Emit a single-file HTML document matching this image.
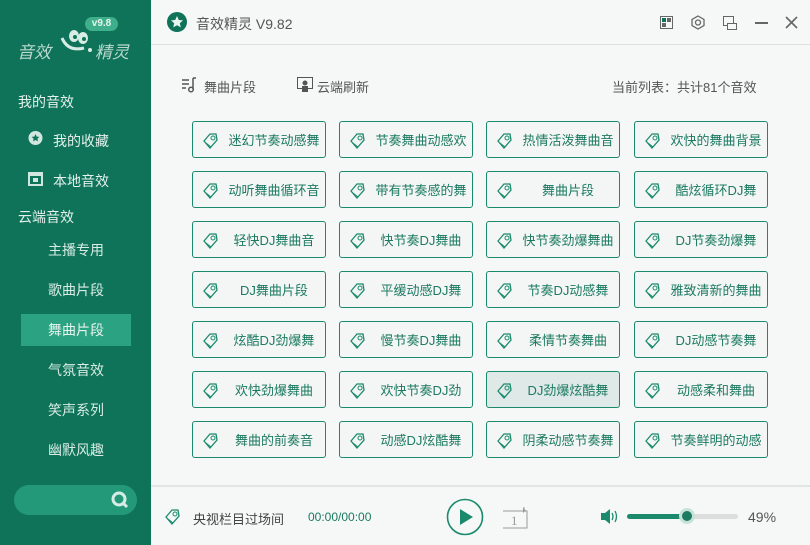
<!DOCTYPE html>
<html><head><meta charset="utf-8"><style>
*{margin:0;padding:0;box-sizing:border-box}
body{width:810px;height:545px;overflow:hidden;font-family:"Liberation Sans","Noto Sans CJK SC",sans-serif;background:#f5f8f7;position:relative}
.side{position:absolute;left:0;top:0;width:151px;height:545px;background:#0f7359}
.side .t{position:absolute;color:#e3f0ec;font-size:14px}
.side .s{position:absolute;left:21px;width:110px;height:32px;line-height:32px;text-align:center;color:#d8ece5;font-size:14px}
.top{position:absolute;left:151px;top:0;right:0;height:45px;border-bottom:1px solid #dde2e0}
.btn{position:absolute;width:134px;height:37px;border:1.5px solid #1b8a6c;border-radius:3px;background:#f4f6f5;color:#1b7a60;font-size:13px;line-height:37px;padding-left:30px;text-align:center}
.btn svg{position:absolute;left:9px;top:10px}
.btn.sel{background:#dfe9e7}
.gray{color:#555;font-size:13px;position:absolute}
</style></head><body>
<div class="side">
 <div style="position:absolute;left:85px;top:17px;width:33px;height:14px;border-radius:7px;background:#3fae8a;color:#e8f5f0;font-size:10px;line-height:14px;text-align:center;font-weight:bold">v9.8</div>
 <div style="position:absolute;left:17px;top:38px;color:#b9d9cf;font-size:17px;font-style:italic">音效</div>
 <svg style="position:absolute;left:58px;top:26px" width="36" height="30"><path d="M4 12 Q10 26 26 22" stroke="#d7ece5" stroke-width="3" fill="none"/><ellipse cx="16" cy="10" rx="5" ry="6" fill="#d7ece5"/><ellipse cx="25" cy="12" rx="5" ry="6" fill="#d7ece5"/><circle cx="17" cy="11" r="2" fill="#0f7359"/><circle cx="26" cy="13" r="2" fill="#0f7359"/><circle cx="32" cy="24" r="2" fill="#d7ece5"/></svg>
 <div style="position:absolute;left:95px;top:38px;color:#b9d9cf;font-size:17px;font-style:italic">精灵</div>
 <div class="t" style="left:18px;top:92px">我的音效</div>
 <svg style="position:absolute;left:28px;top:131px" width="15" height="15"><circle cx="7.5" cy="7" r="7" fill="#d0e6df"/><path d="M7.5 3l1.2 2.6 2.7.3-2 1.8.6 2.7-2.5-1.4-2.5 1.4.6-2.7-2-1.8 2.7-.3z" fill="#0f7359"/></svg>
 <div class="t" style="left:53px;top:131px">我的收藏</div>
 <svg style="position:absolute;left:28px;top:172px" width="15" height="14"><rect x="0" y="0" width="15" height="14" fill="#d0e6df"/><rect x="2" y="4" width="11" height="8" fill="#0f7359"/><rect x="5" y="6" width="5" height="4" fill="#d0e6df"/></svg>
 <div class="t" style="left:53px;top:171px">本地音效</div>
 <div class="t" style="left:18px;top:207px">云端音效</div>
 <div class="s" style="top:234px">主播专用</div>
 <div class="s" style="top:274px">歌曲片段</div>
 <div class="s" style="top:314px;background:#2ba281;color:#e6f3ef">舞曲片段</div>
 <div class="s" style="top:354px">气氛音效</div>
 <div class="s" style="top:394px">笑声系列</div>
 <div class="s" style="top:434px">幽默风趣</div>
 <div style="position:absolute;left:14px;top:485px;width:123px;height:30px;border-radius:15px;background:#24997a"></div>
 <svg style="position:absolute;left:110px;top:490px" width="20" height="20"><circle cx="9" cy="9" r="6" stroke="#d7ece5" stroke-width="3" fill="none"/><path d="M13 13l4 4" stroke="#d7ece5" stroke-width="3"/></svg>
</div>
<div class="top">
 <svg style="position:absolute;left:16px;top:12px" width="20" height="20"><circle cx="10" cy="10" r="10" fill="#0f7359"/><path d="M10 4l1.8 4 4.2.4-3.2 2.8 1 4.2L10 13.2 6.2 15.4l1-4.2L4 8.4l4.2-.4z" fill="#e8f5f0"/></svg>
 <div style="position:absolute;left:45px;top:14px;font-size:14px;color:#555">音效精灵 V9.82</div>
 <svg style="position:absolute;left:509px;top:16px" width="13" height="13"><rect x=".5" y=".5" width="12" height="12" fill="none" stroke="#666"/><rect x="2" y="2" width="4" height="4" fill="#0f7359"/><rect x="7" y="2" width="4" height="4" fill="#666"/><rect x="2" y="7" width="4" height="4" fill="#666"/></svg>
 <svg style="position:absolute;left:540px;top:15px" width="14" height="15"><path d="M7 1l6 3.5v6L7 14 1 10.5v-6z" fill="none" stroke="#666" stroke-width="1.3"/><circle cx="7" cy="7.5" r="2.5" fill="none" stroke="#666" stroke-width="1.3"/></svg>
 <svg style="position:absolute;left:572px;top:16px" width="14" height="14"><rect x=".5" y=".5" width="10" height="9" fill="none" stroke="#666"/><rect x="4.5" y="7.5" width="9" height="6" fill="#f5f8f7" stroke="#666"/></svg>
 <div style="position:absolute;left:604px;top:22px;width:13px;height:2px;background:#666"></div>
 <svg style="position:absolute;left:634px;top:16px" width="13" height="13"><path d="M1 1l11 11M12 1L1 12" stroke="#666" stroke-width="1.6"/></svg>
</div>
<svg style="position:absolute;left:181px;top:77px" width="16" height="16"><path d="M1 3h7M1 7h7M1 11h4" stroke="#555" stroke-width="1.5"/><path d="M12 1v11" stroke="#555" stroke-width="1.5"/><circle cx="10" cy="12.5" r="2.3" fill="none" stroke="#555" stroke-width="1.5"/><path d="M12 1h3" stroke="#555" stroke-width="1.5"/></svg>
<div class="gray" style="left:204px;top:77px">舞曲片段</div>
<svg style="position:absolute;left:297px;top:77px" width="16" height="16"><rect x=".5" y=".5" width="15" height="11" fill="none" stroke="#555"/><circle cx="8" cy="6" r="2.5" fill="#555"/><rect x="5" y="9" width="6" height="6" fill="#555"/></svg>
<div class="gray" style="left:317px;top:77px">云端刷新</div>
<div class="gray" style="left:612px;top:77px">当前列表：共计81个音效</div>
<div id="g"></div>
<div style="position:absolute;left:151px;top:485px;right:0;height:2px;background:#e1e5e3"></div>
<svg style="position:absolute;left:164px;top:508px" width="18" height="18"><path d="M2 9l6-7h6l1 6-7 8z" fill="none" stroke="#1b8a6c" stroke-width="1.3"/><path d="M4 11l5 4" stroke="#1b8a6c"/><circle cx="11" cy="6" r="2" fill="none" stroke="#1b8a6c"/></svg>
<div class="gray" style="left:193px;top:509px;color:#444">央视栏目过场间</div>
<div style="position:absolute;left:308px;top:510px;font-size:12px;color:#1b7a60">00:00/00:00</div>
<svg style="position:absolute;left:446px;top:498px" width="38" height="38"><circle cx="19" cy="19" r="17.5" fill="none" stroke="#1b8a6c" stroke-width="1.6"/><path d="M14 11v16l13-8z" fill="#1b8a6c"/></svg>
<svg style="position:absolute;left:502px;top:505px" width="26" height="24"><path d="M22 2v3M1 6h24v17H1" fill="none" stroke="#999"/><path d="M21 3l3 2.5-3 2.5" fill="#999"/><text x="9" y="20" font-size="13" fill="#999" font-family="Liberation Serif">1</text></svg>
<svg style="position:absolute;left:601px;top:509px" width="18" height="15"><path d="M0 4h4l5-4v15l-5-4H0z" fill="#1b8a6c"/><path d="M11 4q2 3.5 0 7M14 2q3 5.5 0 11" stroke="#1b8a6c" stroke-width="1.3" fill="none"/></svg>
<div style="position:absolute;left:627px;top:514px;width:111px;height:5px;border-radius:3px;background:#ddd"></div>
<div style="position:absolute;left:627px;top:514px;width:60px;height:5px;border-radius:3px;background:#1b8a6c"></div>
<div style="position:absolute;left:679px;top:508px;width:16px;height:16px;border-radius:8px;background:#c7e3d9"></div>
<div style="position:absolute;left:682px;top:511px;width:10px;height:10px;border-radius:5px;background:#1b7a60"></div>
<div class="gray" style="left:748px;top:509px;font-size:14px">49%</div>
<script>
var t=["迷幻节奏动感舞","节奏舞曲动感欢","热情活泼舞曲音","欢快的舞曲背景","动听舞曲循环音","带有节奏感的舞","舞曲片段","酷炫循环DJ舞","轻快DJ舞曲音","快节奏DJ舞曲","快节奏劲爆舞曲","DJ节奏劲爆舞","DJ舞曲片段","平缓动感DJ舞","节奏DJ动感舞","雅致清新的舞曲","炫酷DJ劲爆舞","慢节奏DJ舞曲","柔情节奏舞曲","DJ动感节奏舞","欢快劲爆舞曲","欢快节奏DJ劲","DJ劲爆炫酷舞","动感柔和舞曲","舞曲的前奏音","动感DJ炫酷舞","阴柔动感节奏舞","节奏鲜明的动感"];
var xs=[192,339,486,634],h="";
var ic='<svg width="18" height="18"><path d="M2 9l6-7h6l1 6-7 8z" fill="none" stroke="#1b8a6c" stroke-width="1.3"/><path d="M4 11l5 4" stroke="#1b8a6c"/><circle cx="11" cy="6" r="2" fill="none" stroke="#1b8a6c"/></svg>';
for(var i=0;i<t.length;i++){h+='<div class="btn'+(i==22?' sel':'')+'" style="left:'+xs[i%4]+'px;top:'+(121+50*Math.floor(i/4))+'px">'+ic+t[i]+'</div>';}
document.getElementById("g").innerHTML=h;
</script>
</body></html>
